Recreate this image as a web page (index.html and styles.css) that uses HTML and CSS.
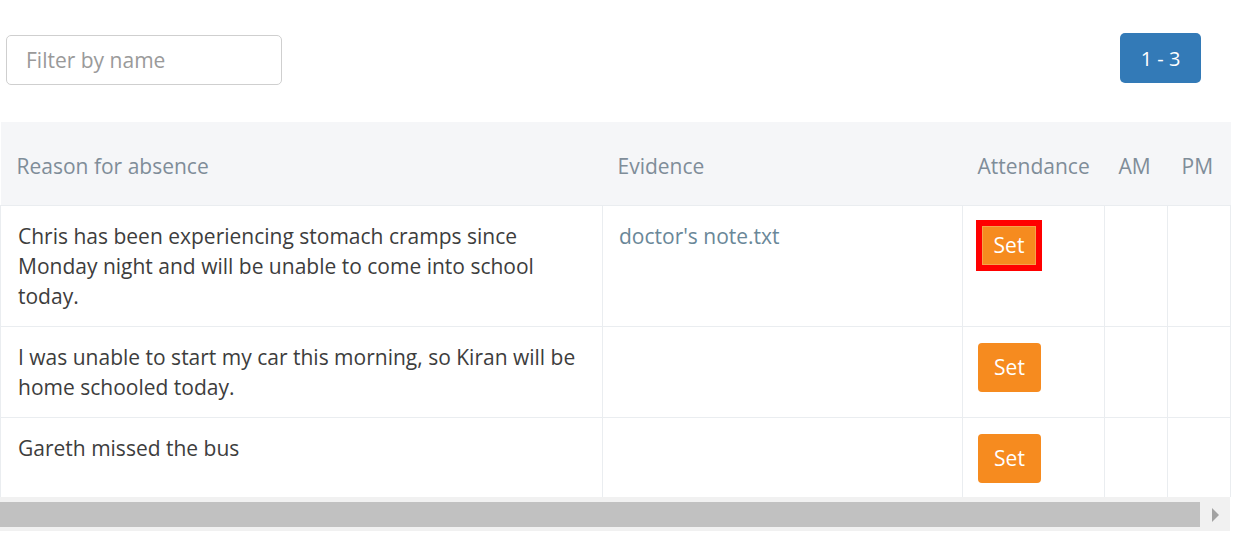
FILE: index.html
```html
<!DOCTYPE html>
<html>
<head>
<meta charset="utf-8">
<link rel="stylesheet" href="styles.css">
</head>
<body>
<div class="page">
  <div class="toolbar">
    <input class="filter" type="text" placeholder="Filter by name">
    <button class="pager">1 - 3</button>
  </div>
  <div class="table-wrap">
    <table class="grid">
      <colgroup>
        <col class="c-reason"><col class="c-evidence"><col class="c-att"><col class="c-am"><col class="c-pm">
      </colgroup>
      <thead>
        <tr>
          <th>Reason for absence</th>
          <th>Evidence</th>
          <th>Attendance</th>
          <th>AM</th>
          <th>PM</th>
        </tr>
      </thead>
      <tbody>
        <tr class="r1">
          <td>Chris has been experiencing stomach cramps since Monday night and will be unable to come into school today.</td>
          <td><a class="file" href="#">doctor's note.txt</a></td>
          <td><button class="set focus">Set</button></td>
          <td></td>
          <td></td>
        </tr>
        <tr class="r2">
          <td>I was unable to start my car this morning, so Kiran will be home schooled today.</td>
          <td></td>
          <td><button class="set">Set</button></td>
          <td></td>
          <td></td>
        </tr>
        <tr class="r3">
          <td>Gareth missed the bus</td>
          <td></td>
          <td><button class="set">Set</button></td>
          <td></td>
          <td></td>
        </tr>
      </tbody>
    </table>
    <div class="scrollbar">
      <div class="thumb"></div>
      <div class="arrow"></div>
    </div>
  </div>
</div>
</body>
</html>
```
FILE: styles.css
```css
* { box-sizing: border-box; }
body {
  margin: 0;
  background: #fff;
  font-family: "Open Sans", "Liberation Sans", sans-serif;
  color: #3d3d3d;
}
.page { width: 1254px; }
.toolbar {
  display: flex;
  justify-content: space-between;
  align-items: flex-start;
  padding: 33px 53px 0 6px;
  height: 122px;
}
.filter {
  margin-top: 2px;
  width: 276px;
  height: 50px;
  border: 1px solid #cfcfcf;
  border-radius: 5px;
  padding: 0 19px;
  font-family: inherit;
  font-size: 21px;
  color: #555;
  outline: none;
}
.filter::placeholder { color: #9a9a9a; }
.pager {
  width: 81px;
  height: 50px;
  background: #337ab7;
  border: none;
  border-radius: 5px;
  color: #fff;
  font-family: inherit;
  font-size: 20px;
  padding: 0;
}
.table-wrap { width: 1230px; }
.grid {
  border-collapse: collapse;
  table-layout: fixed;
  width: 1230px;
}
.c-reason { width: 602px; }
.c-evidence { width: 360px; }
.c-att { width: 142px; }
.c-am { width: 63px; }
.c-pm { width: 63px; }
.grid thead th {
  background: #f5f6f8;
  height: 83px;
  text-align: left;
  font-weight: normal;
  font-size: 21px;
  color: #7f8d99;
  padding: 5px 6px 0 15px;
  border-bottom: 1px solid #eaedf0;
  white-space: nowrap;
}
.grid thead th:first-child { padding-left: 16px; }
.grid thead th:nth-child(4), .grid thead th:nth-child(5) { padding-left: 14px; }
.grid tbody td {
  vertical-align: top;
  border: 1px solid #eaedf0;
  border-top: none;
  padding: 15px 14px 14px 16px;
  font-size: 21px;
  line-height: 30px;
}
.grid tbody td:first-child { border-left: 1px solid #eaedf0; padding-left: 17px; padding-right: 20px; }
.grid tbody tr:last-child td { border-bottom: none; }
.r1 td { height: 121px; }
.r2 td { height: 91px; }
.r3 td { height: 80px; }
.file {
  color: #6a8798;
  text-decoration: none;
}
.set {
  display: block;
  margin-top: 1px;
  margin-left: -1px;
  width: 63px;
  height: 49px;
  background: #f68b1f;
  border: none;
  border-radius: 4px;
  color: #fff;
  font-family: inherit;
  font-size: 21px;
  padding: 0;
}
.set.focus {
  margin-left: -3px;
  margin-top: -1px;
  width: 66px;
  height: 51px;
  border: 6px solid #ff0000;
  border-radius: 0;
  box-shadow: inset 0 0 0 1px #f6a24c;
}
.scrollbar {
  display: flex;
  align-items: center;
  height: 34px;
  background: #f1f1f1;
  padding: 5px 0 4px 0;
}
.thumb {
  width: 1200px;
  height: 25px;
  background: #c1c1c1;
}
.arrow {
  margin-left: 12px;
  width: 0;
  height: 0;
  border-top: 7px solid transparent;
  border-bottom: 7px solid transparent;
  border-left: 7px solid #a3a3a3;
}
```
